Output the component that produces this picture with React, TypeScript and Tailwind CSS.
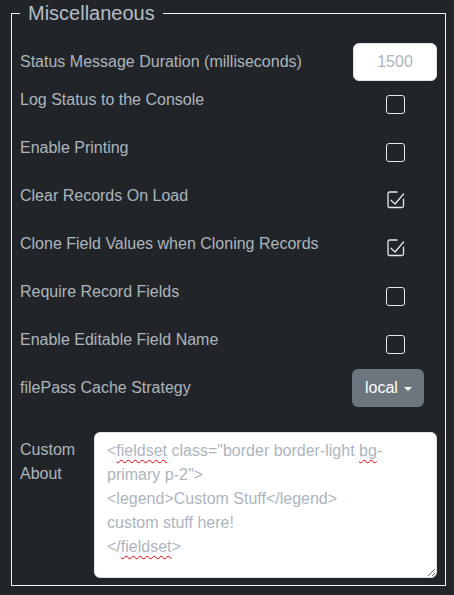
import React from "react";

const rows = [
  { label: "Log Status to the Console", checked: false },
  { label: "Enable Printing", checked: false },
  { label: "Clear Records On Load", checked: true },
  { label: "Clone Field Values when Cloning Records", checked: true },
  { label: "Require Record Fields", checked: false },
  { label: "Enable Editable Field Name", checked: false },
];

function CheckedIcon() {
  return (
    <svg width="18" height="18" viewBox="0 0 18 18" fill="none" stroke="#e5e7eb" strokeWidth="1.3" strokeLinecap="round" strokeLinejoin="round">
      <path d="M16.5 8.2V15a1.5 1.5 0 0 1-1.5 1.5H2.5A1.5 1.5 0 0 1 1 15V2.5A1.5 1.5 0 0 1 2.5 1H10" />
      <path d="M4 9.3l4 3.7 8.6-10" />
    </svg>
  );
}

function Squiggle({ children }: { children: React.ReactNode }) {
  return <span className="underline decoration-wavy decoration-red-600 decoration-1 underline-offset-[3px]">{children}</span>;
}

export default function App() {
  return (
    <div className="min-h-screen bg-[#212529] pl-[11px] pr-2 text-[#adb5bd]" style={{ fontFamily: '"Liberation Sans", Arial, sans-serif' }}>
      <fieldset className="border border-[#f1f3f5] px-2 pb-[7px]">
        <legend className="px-2 text-[20px] leading-[26px] text-[#b6bec6]">Miscellaneous</legend>

        {/* Status duration */}
        <div className="mt-[17px] flex h-[38px] items-center justify-between">
          <span className="text-[16px]">Status Message Duration (milliseconds)</span>
          <input
            defaultValue="1500"
            className="h-[38px] w-[84px] rounded-[6px] border border-[#dee2e6] bg-white text-center text-[16px] text-[#adb5bd] outline-none"
          />
        </div>

        {/* Checkbox rows */}
        <div className="mt-[7px]">
          {rows.map((r) => (
            <div key={r.label} className="flex h-12 items-start justify-between">
              <span className="text-[16px] leading-6">{r.label}</span>
              <div className="flex w-[84px] justify-center">
                {r.checked ? (
                  <div className="mt-[7px] ml-[2px]"><CheckedIcon /></div>
                ) : (
                  <div className="mt-[7px] h-[19px] w-[19px] rounded-[3px] border-[1.5px] border-[#e5e7eb]" />
                )}
              </div>
            </div>
          ))}
        </div>

        {/* Cache strategy */}
        <div className="flex h-6 items-center justify-between">
          <span className="text-[16px] leading-6">filePass Cache Strategy</span>
          <div className="w-[85px]">
            <button className="flex h-[38px] items-center gap-[6px] rounded-[6px] bg-[#6c757d] pl-[13px] pr-[12px] text-[16px] text-white">
              local
              <span className="mt-[2px] h-0 w-0 border-x-[4px] border-t-[4px] border-x-transparent border-t-white" />
            </button>
          </div>
        </div>

        {/* Custom about */}
        <div className="mt-8 flex">
          <div className="w-[74px] pt-[6px] text-[16px] leading-6">
            Custom
            <br />
            About
          </div>
          <div
            role="textbox"
            className="h-[146px] flex-1 resize-y overflow-auto whitespace-pre-wrap rounded-[6px] border border-[#dee2e6] bg-white px-3 py-[6px] text-[16px] leading-6 text-[#adb5bd]"
          >
            {"<"}<Squiggle>fieldset</Squiggle>{' class="border border-light '}<Squiggle>bg</Squiggle>{'-primary p-2">\n<legend>Custom Stuff</legend>\ncustom stuff here!\n</'}<Squiggle>fieldset</Squiggle>{">"}
          </div>
        </div>
      </fieldset>
    </div>
  );
}
